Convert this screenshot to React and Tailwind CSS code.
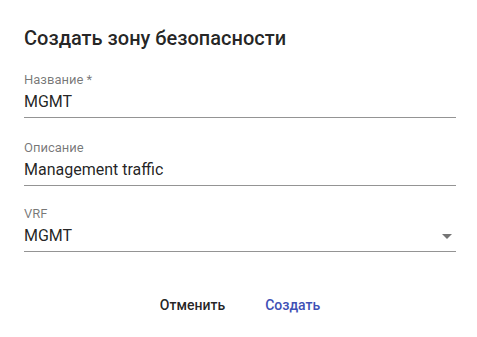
export default function App() {
  const fields = [
    { label: "Название *", value: "MGMT", gap: "" },
    { label: "Описание", value: "Management traffic", gap: "mt-[20px]" },
    { label: "VRF", value: "MGMT", select: true, gap: "mt-[18px]" },
  ];

  return (
    <div className="w-[477px] h-[337px] bg-white font-['Roboto','Liberation_Sans',sans-serif] overflow-hidden">
      <div className="pl-6 pr-[21px] pt-[22px]">
        <h2 className="text-[20px] leading-[32px] font-medium text-[rgba(0,0,0,0.87)]">
          Создать зону безопасности
        </h2>

        <div className="mt-4 flex flex-col">
          {fields.map(f => (
            <div key={f.label} className={`flex flex-col ${f.gap}`}>
              <label className="text-[13px] leading-4 pt-[2px] text-[rgba(0,0,0,0.54)]">{f.label}</label>
              <div className="mt-[2px] flex items-center justify-between border-b border-[rgba(0,0,0,0.42)] pb-[3px]">
                <span className="text-[16px] leading-6 text-[rgba(0,0,0,0.87)]">{f.value}</span>
                {f.select && (
                  <svg width="10" height="5" viewBox="0 0 10 5" className="mr-1">
                    <path d="M0 0L5 5L10 0Z" fill="rgba(0,0,0,0.54)" />
                  </svg>
                )}
              </div>
            </div>
          ))}
        </div>

        <div className="mt-[35px] flex justify-center gap-[40px]">
          <button className="h-9 text-[14px] font-medium text-[rgba(0,0,0,0.87)]">Отменить</button>
          <button className="h-9 text-[14px] font-medium text-[#3f51b5]">Создать</button>
        </div>
      </div>
    </div>
  );
}
